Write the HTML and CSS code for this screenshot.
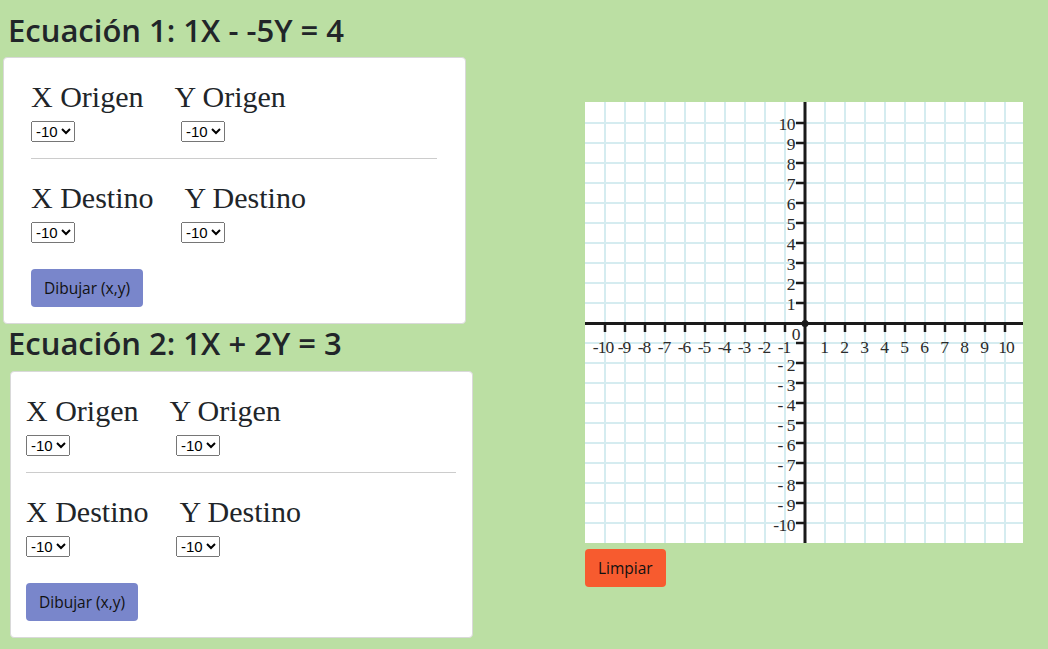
FILE: index.html
```html
<!DOCTYPE html>
<html lang="es">
<head>
<meta charset="utf-8">
<title>Sistema de ecuaciones</title>
<link rel="stylesheet" href="styles.css">
</head>
<body>
<main class="page">
  <section class="equations">
    <h2 class="eq-title">Ecuación 1: 1X - -5Y = 4</h2>
    <div class="card card-first">
      <div class="coord-labels"><span>X Origen</span><span>Y Origen</span></div>
      <div class="coord-selects">
        <select><option>-10</option><option>-9</option><option>-8</option><option>-7</option><option>-6</option><option>-5</option><option>-4</option><option>-3</option><option>-2</option><option>-1</option><option>0</option><option>1</option><option>2</option><option>3</option><option>4</option><option>5</option><option>6</option><option>7</option><option>8</option><option>9</option><option>10</option></select>
        <select><option>-10</option><option>-9</option><option>-8</option><option>-7</option><option>-6</option><option>-5</option><option>-4</option><option>-3</option><option>-2</option><option>-1</option><option>0</option><option>1</option><option>2</option><option>3</option><option>4</option><option>5</option><option>6</option><option>7</option><option>8</option><option>9</option><option>10</option></select>
      </div>
      <hr class="divider">
      <div class="coord-labels"><span>X Destino</span><span>Y Destino</span></div>
      <div class="coord-selects">
        <select><option>-10</option><option>-9</option><option>-8</option><option>-7</option><option>-6</option><option>-5</option><option>-4</option><option>-3</option><option>-2</option><option>-1</option><option>0</option><option>1</option><option>2</option><option>3</option><option>4</option><option>5</option><option>6</option><option>7</option><option>8</option><option>9</option><option>10</option></select>
        <select><option>-10</option><option>-9</option><option>-8</option><option>-7</option><option>-6</option><option>-5</option><option>-4</option><option>-3</option><option>-2</option><option>-1</option><option>0</option><option>1</option><option>2</option><option>3</option><option>4</option><option>5</option><option>6</option><option>7</option><option>8</option><option>9</option><option>10</option></select>
      </div>
      <button class="btn btn-draw" type="button">Dibujar (x,y)</button>
    </div>

    <h2 class="eq-title eq-title-second">Ecuación 2: 1X + 2Y = 3</h2>
    <div class="card card-second">
      <div class="coord-labels"><span>X Origen</span><span>Y Origen</span></div>
      <div class="coord-selects">
        <select><option>-10</option><option>-9</option><option>-8</option><option>-7</option><option>-6</option><option>-5</option><option>-4</option><option>-3</option><option>-2</option><option>-1</option><option>0</option><option>1</option><option>2</option><option>3</option><option>4</option><option>5</option><option>6</option><option>7</option><option>8</option><option>9</option><option>10</option></select>
        <select><option>-10</option><option>-9</option><option>-8</option><option>-7</option><option>-6</option><option>-5</option><option>-4</option><option>-3</option><option>-2</option><option>-1</option><option>0</option><option>1</option><option>2</option><option>3</option><option>4</option><option>5</option><option>6</option><option>7</option><option>8</option><option>9</option><option>10</option></select>
      </div>
      <hr class="divider">
      <div class="coord-labels"><span>X Destino</span><span>Y Destino</span></div>
      <div class="coord-selects">
        <select><option>-10</option><option>-9</option><option>-8</option><option>-7</option><option>-6</option><option>-5</option><option>-4</option><option>-3</option><option>-2</option><option>-1</option><option>0</option><option>1</option><option>2</option><option>3</option><option>4</option><option>5</option><option>6</option><option>7</option><option>8</option><option>9</option><option>10</option></select>
        <select><option>-10</option><option>-9</option><option>-8</option><option>-7</option><option>-6</option><option>-5</option><option>-4</option><option>-3</option><option>-2</option><option>-1</option><option>0</option><option>1</option><option>2</option><option>3</option><option>4</option><option>5</option><option>6</option><option>7</option><option>8</option><option>9</option><option>10</option></select>
      </div>
      <button class="btn btn-draw" type="button">Dibujar (x,y)</button>
    </div>
  </section>

  <section class="plot">
    <svg class="graph" width="438" height="441" viewBox="0 0 438 441" xmlns="http://www.w3.org/2000/svg">
      <rect width="438" height="441" fill="#ffffff"/>
      <path class="grid" d="M20 0V441M40 0V441M60 0V441M80 0V441M100 0V441M120 0V441M140 0V441M160 0V441M180 0V441M200 0V441M240 0V441M260 0V441M280 0V441M300 0V441M320 0V441M340 0V441M360 0V441M380 0V441M400 0V441M420 0V441M0 21H438M0 41H438M0 61H438M0 81H438M0 101H438M0 121H438M0 141H438M0 161H438M0 181H438M0 201H438M0 241H438M0 261H438M0 281H438M0 301H438M0 321H438M0 341H438M0 361H438M0 381H438M0 401H438M0 421H438"/>
      <path class="ticks" d="M20 221V230M40 221V230M60 221V230M80 221V230M100 221V230M120 221V230M140 221V230M160 221V230M180 221V230M200 221V230M240 221V230M260 221V230M280 221V230M300 221V230M320 221V230M340 221V230M360 221V230M380 221V230M400 221V230M420 221V230M211 21H220M211 41H220M211 61H220M211 81H220M211 101H220M211 121H220M211 141H220M211 161H220M211 181H220M211 201H220M211 241H220M211 261H220M211 281H220M211 301H220M211 321H220M211 341H220M211 361H220M211 381H220M211 401H220M211 421H220"/>
      <path class="axis" d="M0 221.5H438M220 0V441"/>
      <circle cx="220" cy="221.5" r="3.5" fill="#1a1a1a"/>
      <g class="ylabels">
        <text x="210" y="28">10</text>
        <text x="210" y="48">9</text>
        <text x="210" y="68">8</text>
        <text x="210" y="88">7</text>
        <text x="210" y="108">6</text>
        <text x="210" y="128">5</text>
        <text x="210" y="148">4</text>
        <text x="210" y="168">3</text>
        <text x="210" y="188">2</text>
        <text x="210" y="208">1</text>
        <text x="210" y="269">- 2</text>
        <text x="210" y="289">- 3</text>
        <text x="210" y="309">- 4</text>
        <text x="210" y="329">- 5</text>
        <text x="210" y="349">- 6</text>
        <text x="210" y="369">- 7</text>
        <text x="210" y="389">- 8</text>
        <text x="210" y="409">- 9</text>
        <text x="210" y="429">-10</text>
      </g>
      <g class="xlabels">
        <text x="18" y="251">-10</text>
        <text x="39" y="251">-9</text>
        <text x="59" y="251">-8</text>
        <text x="79" y="251">-7</text>
        <text x="99" y="251">-6</text>
        <text x="119" y="251">-5</text>
        <text x="139" y="251">-4</text>
        <text x="159" y="251">-3</text>
        <text x="179" y="251">-2</text>
        <text x="199" y="251">-1</text>
        <text x="239" y="251">1</text>
        <text x="259" y="251">2</text>
        <text x="279" y="251">3</text>
        <text x="299" y="251">4</text>
        <text x="319" y="251">5</text>
        <text x="339" y="251">6</text>
        <text x="359" y="251">7</text>
        <text x="379" y="251">8</text>
        <text x="399" y="251">9</text>
        <text x="421" y="251">10</text>
      </g>
      <text class="origin-label" x="211" y="238">0</text>
    </svg>
    <button class="btn btn-clear" type="button">Limpiar</button>
  </section>
</main>
</body>
</html>
```

FILE: styles.css
```css
body {
  margin: 0;
  background: #bbdfa3;
  color: #212529;
  font-family: "Open Sans", "Noto Sans", sans-serif;
}

.page {
  display: flex;
  align-items: flex-start;
}

.equations {
  width: 473px;
  padding-top: 12px;
}

.eq-title {
  margin: 0 0 9px 8px;
  font-size: 31px;
  font-weight: 600;
  line-height: 36px;
  letter-spacing: 0;
  color: #212529;
}

.eq-title-second {
  margin-top: 1px;
  margin-bottom: 10px;
}

.card {
  box-sizing: border-box;
  width: 463px;
  background: #ffffff;
  border: 1px solid #d9d9d9;
  border-radius: 4px;
  padding: 22px 28px 16px 27px;
}

.card-first {
  margin-left: 3px;
}

.card-second {
  margin-left: 10px;
  padding-left: 15px;
  padding-right: 16px;
}

.coord-labels {
  display: flex;
  gap: 31px;
  font-family: "Liberation Serif", "Times New Roman", serif;
  font-size: 30px;
  line-height: 34px;
  color: #212529;
}

.coord-selects {
  display: grid;
  grid-template-columns: 150px auto;
  justify-items: start;
  margin-top: 7px;
}

.coord-selects select {
  font-family: "Liberation Sans", Arial, sans-serif;
  font-size: 15px;
  height: 21px;
  color: #000;
}

.divider {
  border: 0;
  border-top: 1px solid #cccccc;
  margin: 16px 0 22px;
  height: 0;
}

.btn {
  display: block;
  font-family: "Open Sans", "Noto Sans", sans-serif;
  font-size: 15.5px;
  line-height: 24px;
  padding: 6px 12px;
  border: 1px solid transparent;
  border-radius: 4px;
  color: #111;
}

.btn-draw {
  background: #7986cb;
  margin-top: 26px;
}

.plot {
  margin-left: 112px;
  padding-top: 102px;
  display: flex;
  flex-direction: column;
  align-items: flex-start;
  gap: 6px;
}

.graph {
  display: block;
}

.graph .grid {
  stroke: #d5ecf0;
  stroke-width: 2;
  fill: none;
}

.graph .ticks {
  stroke: #1a1a1a;
  stroke-width: 2.5;
  fill: none;
}

.graph .axis {
  stroke: #1a1a1a;
  stroke-width: 3;
  fill: none;
}

.graph text {
  font-family: "Liberation Serif", "Times New Roman", serif;
  font-size: 17.5px;
  fill: #2b2b2b;
}

.graph .ylabels text {
  text-anchor: end;
  letter-spacing: -0.5px;
}

.graph .xlabels text {
  text-anchor: middle;
  letter-spacing: -1px;
}

.graph .origin-label {
  text-anchor: middle;
}

.btn-clear {
  background: #f75b2f;
  padding-left: 12px;
  padding-right: 12px;
}
```
